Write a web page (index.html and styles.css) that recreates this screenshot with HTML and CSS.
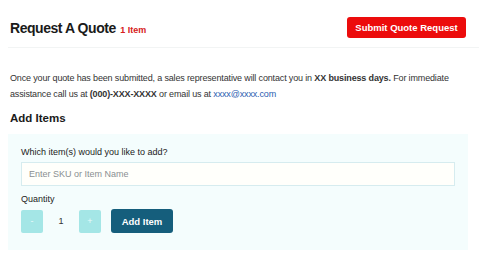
FILE: index.html
```html
<!DOCTYPE html>
<html lang="en">
<head>
    <meta charset="UTF-8">
    <title>Request A Quote</title>
    <link rel="stylesheet" href="styles.css">
</head>
<body>

<div class="page">
    <div class="header">
        <h1>Request A Quote <span class="count">1 Item</span></h1>
        <button class="submit">Submit Quote Request</button>
    </div>

    <p class="intro">Once your quote has been submitted, a sales representative will contact you in <b>XX business days.</b> For immediate assistance call us at <b>(000)-XXX-XXXX</b> or email us at <a href="#">xxxx@xxxx.com</a></p>

    <h2>Add Items</h2>

    <div class="panel">
        <label for="sku">Which item(s) would you like to add?</label>
        <input id="sku" type="text" placeholder="Enter SKU or Item Name">
        <div class="qty-label">Quantity</div>
        <div class="qty-row">
            <button class="step">-</button>
            <span class="qty">1</span>
            <button class="step">+</button>
            <button class="add">Add Item</button>
        </div>
    </div>
</div>

</body>
</html>
```

FILE: styles.css
```css
body {
    margin: 0;
    font-family: "Liberation Sans", Arial, sans-serif;
    background-color: #fff;
    color: #222;
}

.page {
    padding: 0 10px;
}

.header {
    display: flex;
    justify-content: space-between;
    align-items: center;
    height: 48px;
    padding-top: 8px;
    border-bottom: 1px solid #f2f4f4;
    margin: 0 -2px;
    padding-left: 2px;
    padding-right: 13px;
    box-sizing: border-box;
}

h1 {
    margin: 0;
    font-size: 14px;
    letter-spacing: -0.45px;
    font-weight: bold;
    color: #1a1a1a;
}

.count {
    font-size: 9px;
    letter-spacing: 0;
    color: #d62020;
    margin-left: 1px;
}

.submit {
    background-color: #ec0c0c;
    color: #fff;
    border: none;
    border-radius: 3px;
    font-family: inherit;
    font-size: 9.5px;
    font-weight: bold;
    width: 119px;
    height: 21px;
    padding: 0;
}

.intro {
    margin: 22px 0 0 0;
    font-size: 9px;
    letter-spacing: -0.15px;
    line-height: 16px;
    color: #333;
}

.intro a {
    color: #2a5db0;
    text-decoration: none;
}

h2 {
    margin: 10px 0 0 0;
    font-size: 11.5px;
    font-weight: bold;
    color: #1a1a1a;
}

.panel {
    margin: 10px 9px 0 -2px;
    background-color: #f4fdfd;
    padding: 13px 13px 17px 13px;
}

label {
    display: block;
    font-size: 9px;
    color: #222;
}

input {
    display: block;
    box-sizing: border-box;
    width: 100%;
    height: 24px;
    margin-top: 5px;
    border: 1px solid #d6ecef;
    background-color: #fffffb;
    padding: 0 7px;
    font-family: inherit;
    font-size: 9px;
}

input::placeholder {
    color: #8a8f92;
}

.qty-label {
    margin-top: 8px;
    font-size: 9px;
    color: #222;
}

.qty-row {
    display: flex;
    align-items: center;
    margin-top: 5px;
}

.step {
    width: 22px;
    height: 23px;
    border: none;
    border-radius: 2px;
    background-color: #a4e6e6;
    color: #e8fafa;
    font-size: 9px;
    padding: 0;
}

.qty {
    width: 36px;
    text-align: center;
    font-size: 9px;
    color: #333;
}

.add {
    margin-left: 10px;
    width: 62px;
    height: 24px;
    border: none;
    border-radius: 3px;
    background-color: #155e7c;
    color: #fff;
    font-family: inherit;
    font-size: 9.5px;
    font-weight: bold;
    padding: 0;
}
```
